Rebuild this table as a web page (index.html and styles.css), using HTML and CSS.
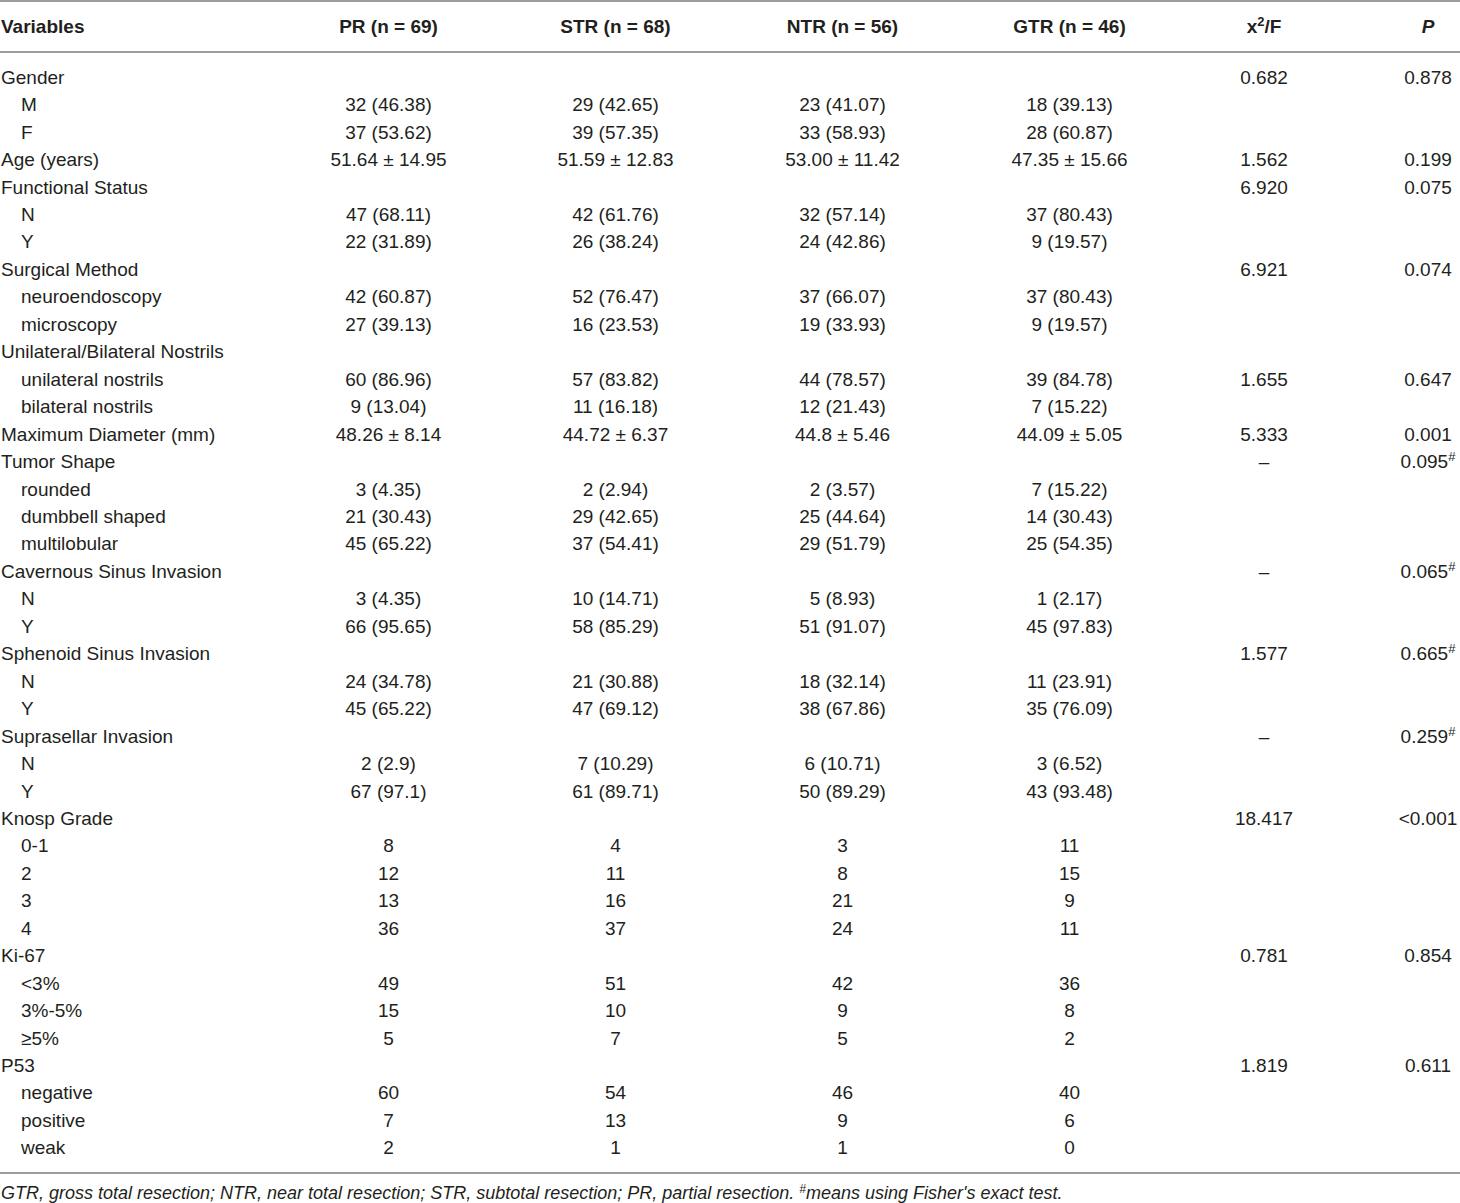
FILE: index.html
```html
<!DOCTYPE html>
<html>
<head>
<meta charset="utf-8">
<link rel="stylesheet" href="styles.css">
</head>
<body>
<div class="wrap">
<table class="tbl">
<colgroup>
<col class="c1"><col class="cg"><col class="cg"><col class="cg"><col class="cg"><col class="c6"><col class="c7">
</colgroup>
<thead>
<tr><th class="lab">Variables</th><th>PR (n = 69)</th><th>STR (n = 68)</th><th>NTR (n = 56)</th><th>GTR (n = 46)</th><th>x<sup>2</sup>/F</th><th class="p"><i>P</i></th></tr>
</thead>
<tbody>
<tr class="first"><td class="lab">Gender</td><td></td><td></td><td></td><td></td><td>0.682</td><td class="p">0.878</td></tr>
<tr><td class="lab sub">M</td><td>32 (46.38)</td><td>29 (42.65)</td><td>23 (41.07)</td><td>18 (39.13)</td><td></td><td class="p"></td></tr>
<tr><td class="lab sub">F</td><td>37 (53.62)</td><td>39 (57.35)</td><td>33 (58.93)</td><td>28 (60.87)</td><td></td><td class="p"></td></tr>
<tr><td class="lab">Age (years)</td><td>51.64 ± 14.95</td><td>51.59 ± 12.83</td><td>53.00 ± 11.42</td><td>47.35 ± 15.66</td><td>1.562</td><td class="p">0.199</td></tr>
<tr><td class="lab">Functional Status</td><td></td><td></td><td></td><td></td><td>6.920</td><td class="p">0.075</td></tr>
<tr><td class="lab sub">N</td><td>47 (68.11)</td><td>42 (61.76)</td><td>32 (57.14)</td><td>37 (80.43)</td><td></td><td class="p"></td></tr>
<tr><td class="lab sub">Y</td><td>22 (31.89)</td><td>26 (38.24)</td><td>24 (42.86)</td><td>9 (19.57)</td><td></td><td class="p"></td></tr>
<tr><td class="lab">Surgical Method</td><td></td><td></td><td></td><td></td><td>6.921</td><td class="p">0.074</td></tr>
<tr><td class="lab sub">neuroendoscopy</td><td>42 (60.87)</td><td>52 (76.47)</td><td>37 (66.07)</td><td>37 (80.43)</td><td></td><td class="p"></td></tr>
<tr><td class="lab sub">microscopy</td><td>27 (39.13)</td><td>16 (23.53)</td><td>19 (33.93)</td><td>9 (19.57)</td><td></td><td class="p"></td></tr>
<tr><td class="lab">Unilateral/Bilateral Nostrils</td><td></td><td></td><td></td><td></td><td></td><td class="p"></td></tr>
<tr><td class="lab sub">unilateral nostrils</td><td>60 (86.96)</td><td>57 (83.82)</td><td>44 (78.57)</td><td>39 (84.78)</td><td>1.655</td><td class="p">0.647</td></tr>
<tr><td class="lab sub">bilateral nostrils</td><td>9 (13.04)</td><td>11 (16.18)</td><td>12 (21.43)</td><td>7 (15.22)</td><td></td><td class="p"></td></tr>
<tr><td class="lab">Maximum Diameter (mm)</td><td>48.26 ± 8.14</td><td>44.72 ± 6.37</td><td>44.8 ± 5.46</td><td>44.09 ± 5.05</td><td>5.333</td><td class="p">0.001</td></tr>
<tr><td class="lab">Tumor Shape</td><td></td><td></td><td></td><td></td><td class="dash">–</td><td class="p">0.095<sup>#</sup></td></tr>
<tr><td class="lab sub">rounded</td><td>3 (4.35)</td><td>2 (2.94)</td><td>2 (3.57)</td><td>7 (15.22)</td><td></td><td class="p"></td></tr>
<tr><td class="lab sub">dumbbell shaped</td><td>21 (30.43)</td><td>29 (42.65)</td><td>25 (44.64)</td><td>14 (30.43)</td><td></td><td class="p"></td></tr>
<tr><td class="lab sub">multilobular</td><td>45 (65.22)</td><td>37 (54.41)</td><td>29 (51.79)</td><td>25 (54.35)</td><td></td><td class="p"></td></tr>
<tr><td class="lab">Cavernous Sinus Invasion</td><td></td><td></td><td></td><td></td><td class="dash">–</td><td class="p">0.065<sup>#</sup></td></tr>
<tr><td class="lab sub">N</td><td>3 (4.35)</td><td>10 (14.71)</td><td>5 (8.93)</td><td>1 (2.17)</td><td></td><td class="p"></td></tr>
<tr><td class="lab sub">Y</td><td>66 (95.65)</td><td>58 (85.29)</td><td>51 (91.07)</td><td>45 (97.83)</td><td></td><td class="p"></td></tr>
<tr><td class="lab">Sphenoid Sinus Invasion</td><td></td><td></td><td></td><td></td><td>1.577</td><td class="p">0.665<sup>#</sup></td></tr>
<tr><td class="lab sub">N</td><td>24 (34.78)</td><td>21 (30.88)</td><td>18 (32.14)</td><td>11 (23.91)</td><td></td><td class="p"></td></tr>
<tr><td class="lab sub">Y</td><td>45 (65.22)</td><td>47 (69.12)</td><td>38 (67.86)</td><td>35 (76.09)</td><td></td><td class="p"></td></tr>
<tr><td class="lab">Suprasellar Invasion</td><td></td><td></td><td></td><td></td><td class="dash">–</td><td class="p">0.259<sup>#</sup></td></tr>
<tr><td class="lab sub">N</td><td>2 (2.9)</td><td>7 (10.29)</td><td>6 (10.71)</td><td>3 (6.52)</td><td></td><td class="p"></td></tr>
<tr><td class="lab sub">Y</td><td>67 (97.1)</td><td>61 (89.71)</td><td>50 (89.29)</td><td>43 (93.48)</td><td></td><td class="p"></td></tr>
<tr><td class="lab">Knosp Grade</td><td></td><td></td><td></td><td></td><td>18.417</td><td class="p">&lt;0.001</td></tr>
<tr><td class="lab sub">0-1</td><td>8</td><td>4</td><td>3</td><td>11</td><td></td><td class="p"></td></tr>
<tr><td class="lab sub">2</td><td>12</td><td>11</td><td>8</td><td>15</td><td></td><td class="p"></td></tr>
<tr><td class="lab sub">3</td><td>13</td><td>16</td><td>21</td><td>9</td><td></td><td class="p"></td></tr>
<tr><td class="lab sub">4</td><td>36</td><td>37</td><td>24</td><td>11</td><td></td><td class="p"></td></tr>
<tr><td class="lab">Ki-67</td><td></td><td></td><td></td><td></td><td>0.781</td><td class="p">0.854</td></tr>
<tr><td class="lab sub">&lt;3%</td><td>49</td><td>51</td><td>42</td><td>36</td><td></td><td class="p"></td></tr>
<tr><td class="lab sub">3%-5%</td><td>15</td><td>10</td><td>9</td><td>8</td><td></td><td class="p"></td></tr>
<tr><td class="lab sub">≥5%</td><td>5</td><td>7</td><td>5</td><td>2</td><td></td><td class="p"></td></tr>
<tr><td class="lab">P53</td><td></td><td></td><td></td><td></td><td>1.819</td><td class="p">0.611</td></tr>
<tr><td class="lab sub">negative</td><td>60</td><td>54</td><td>46</td><td>40</td><td></td><td class="p"></td></tr>
<tr><td class="lab sub">positive</td><td>7</td><td>13</td><td>9</td><td>6</td><td></td><td class="p"></td></tr>
<tr class="last"><td class="lab sub">weak</td><td>2</td><td>1</td><td>1</td><td>0</td><td></td><td class="p"></td></tr>
</tbody>
</table>
<p class="note">GTR, gross total resection; NTR, near total resection; STR, subtotal resection; PR, partial resection. <sup>#</sup>means using Fisher's exact test.</p>
</div>
</body>
</html>
```
FILE: styles.css
```css
html, body {
  margin: 0;
  padding: 0;
  background: #ffffff;
}
body {
  font-family: "Liberation Sans", Arial, Helvetica, sans-serif;
  color: #231f20;
  font-size: 19px;
}
.wrap {
  width: 1460px;
}
.tbl {
  width: 1460px;
  border-collapse: collapse;
  table-layout: fixed;
  border-top: 2px solid #9d9d9d;
  border-bottom: 2px solid #9d9d9d;
}
.c1 { width: 275px; }
.cg { width: 227px; }
.c6 { width: 162px; }
.c7 { width: 115px; }
.tbl th, .tbl td {
  padding: 0;
  text-align: center;
  white-space: nowrap;
  line-height: 22px;
}
.tbl thead th {
  font-weight: bold;
  height: 49px;
  vertical-align: middle;
  border-bottom: 2px solid #9d9d9d;
}
.tbl td {
  height: 27.46px;
  vertical-align: middle;
}
.tbl tr.first td {
  padding-top: 11px;
}
.tbl tr.last td {
  padding-bottom: 10px;
}
.tbl .lab {
  text-align: left;
  padding-left: 1px;
}
.tbl td.sub {
  padding-left: 21px;
}
.tbl .p {
  padding-left: 51px;
}
.tbl sup {
  font-size: 13px;
  line-height: 0;
  vertical-align: 7px;
}
.note {
  margin: 0;
  padding: 9px 0 0 1px;
  font-style: italic;
  font-size: 18px;
  line-height: 21px;
}
.note sup {
  font-size: 12px;
  line-height: 0;
  vertical-align: 6px;
}
```
